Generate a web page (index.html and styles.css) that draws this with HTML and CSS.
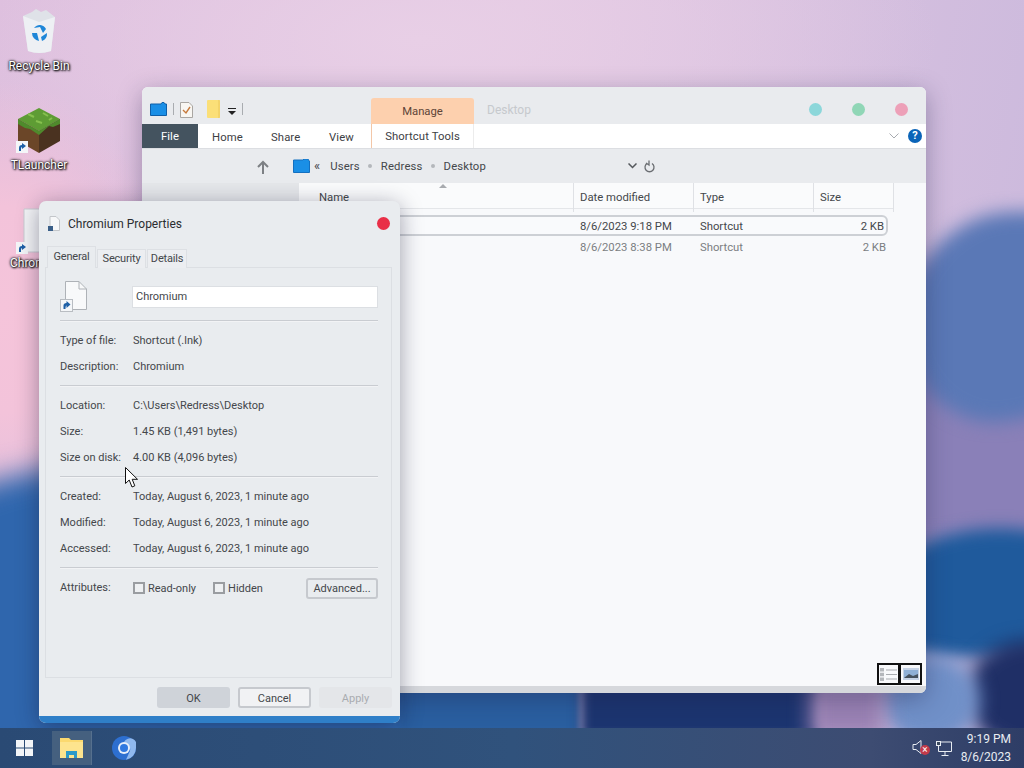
FILE: index.html
```html
<!DOCTYPE html>
<html lang="en">
<head>
    <meta charset="UTF-8">
    <title>Chromium Properties</title>
    <link rel="stylesheet" href="styles.css">
</head>
<body>
    <div class="desktop">
        <div class="blob blob-purple"></div>
        <div class="blob blob-right"></div>
        <div class="blob blob-left"></div>
        <div class="blob blob-deep"></div>
        <div class="blob blob-navy"></div>
        <div class="blob blob-pale"></div>
        <div class="blob blob-mid"></div>
        <div class="blob blob-dark"></div>
        <div class="blob blob-pink"></div>

        <!-- desktop icons -->
        <div class="desk-icon icon-bin">
            <svg width="40" height="46" viewBox="0 0 40 46">
                <path d="M4 8 L13 4 L17 1 L22 4 L27 2 L36 9 L32 43 Q20 47 9 43 Z" fill="#dfe2e8"/>
                <path d="M4 8 L20 14 L36 9 L32 43 Q20 47 9 43 Z" fill="#eef0f4"/>
                <path d="M15 20 A7 7 0 0 1 27 21 L24 25 L21 19 Z M13 25 L18 25 L20 33 A8 8 0 0 1 13 25 Z M28 25 A8 8 0 0 1 23 33 L22 29 Z" fill="#1f86d8"/>
            </svg>
            <span>Recycle Bin</span>
        </div>
        <div class="desk-icon icon-tl">
            <svg width="46" height="46" viewBox="0 0 46 46">
                <path d="M23 1 L44 12 L23 24 L2 12 Z" fill="#5e9c34"/>
                <path d="M2 12 L23 24 L23 46 L2 34 Z" fill="#6b4628"/>
                <path d="M44 12 L23 24 L23 46 L44 34 Z" fill="#4a3220"/>
                <path d="M2 12 L23 24 L44 12 L44 17 L37 20 L33 19 L23 28 L14 22 L9 21 L2 17 Z" fill="#4f8a2c"/>
                <path d="M12 7 L18 10 M27 6 L32 9 M20 14 L26 16 M33 13 L36 11" stroke="#86c04e" stroke-width="2"/>
            </svg>
            <svg class="arrow" width="12" height="12" viewBox="0 0 12 12">
                <rect width="12" height="12" fill="#f4f6f8"/>
                <path d="M3 10 V7 Q3 4 6 4 V2 L10 5 L6 8 V6 Q5 6 5 8 V10 Z" fill="#1d5fa6"/>
            </svg>
            <span>TLauncher</span>
        </div>
        <div class="desk-icon icon-chrome">
            <svg width="40" height="46" viewBox="0 0 40 46">
                <path d="M4 1 H28 L36 9 V44 H4 Z" fill="#f3f4f6" stroke="#c9ccd2"/>
            </svg>
            <svg class="arrow" width="12" height="12" viewBox="0 0 12 12">
                <rect width="12" height="12" fill="#f4f6f8"/>
                <path d="M3 10 V7 Q3 4 6 4 V2 L10 5 L6 8 V6 Q5 6 5 8 V10 Z" fill="#1d5fa6"/>
            </svg>
            <span>Chromium</span>
        </div>

        <!-- explorer window -->
        <div class="explorer">
            <div class="ex-title">
                <div class="qat">
                    <svg class="qat-folder" width="17" height="14" viewBox="0 0 17 14">
                        <path d="M.5 2 H11 L12 .5 H14 L15 2 H16.500 V13.500 H.5 Z" fill="#1a8fe6" stroke="#0f5fa8"/>
                    </svg>
                    <span class="qat-sep"></span>
                    <svg width="13" height="16" viewBox="0 0 13 16">
                        <path d="M.5.5 H9 L12.500 4 V15.500 H.5 Z" fill="#f8f6f2" stroke="#a9a6a2"/>
                        <path d="M3 8 L6 11 L10 5" fill="none" stroke="#c77a3c" stroke-width="1.400"/>
                    </svg>
                    <svg class="qat-note" width="13" height="18" viewBox="0 0 13 18">
                        <rect width="13" height="18" rx="1" fill="#fbdf78"/>
                        <path d="M12 0 V18" stroke="#ecc85c"/>
                    </svg>
                    <svg class="qat-drop" width="8" height="7" viewBox="0 0 8 7">
                        <path d="M0 0 H8 V1 H0 Z M0 3 H8 L4 7 Z" fill="#222"/>
                    </svg>
                    <span class="qat-sep"></span>
                </div>
                <div class="manage">Manage</div>
                <div class="ex-caption">Desktop</div>
                <div class="dots">
                    <span class="dot dot-min"></span>
                    <span class="dot dot-max"></span>
                    <span class="dot dot-close"></span>
                </div>
            </div>
            <div class="ribbon">
                <div class="rb-file">File</div>
                <div class="rb-tab rb-home">Home</div>
                <div class="rb-tab rb-share">Share</div>
                <div class="rb-tab rb-view">View</div>
                <div class="rb-tools">Shortcut Tools</div>
                <svg class="rb-chev" width="10" height="6" viewBox="0 0 10 6">
                    <path d="M.5.5 L5 5 L9.500.5" fill="none" stroke="#a8abb0"/>
                </svg>
                <div class="rb-help">?</div>
            </div>
            <div class="addr">
                <svg class="addr-up" width="12" height="14" viewBox="0 0 12 14">
                    <path d="M6 14 V2 M1 7 L6 2 L11 7" fill="none" stroke="#7d8084" stroke-width="2"/>
                </svg>
                <svg width="17" height="14" viewBox="0 0 17 14">
                    <path d="M.5 1 H10 L11 0 H15 L16 2 H16.500 V13.500 H.5 Z" fill="#1a8fe6" stroke="#1470c0"/>
                </svg>
                <span class="addr-more">«</span>
                <span>Users</span><span class="crumb-dot"></span>
                <span>Redress</span><span class="crumb-dot"></span>
                <span>Desktop</span>
                <svg class="addr-chev" width="9" height="6" viewBox="0 0 9 6">
                    <path d="M.5.5 L4.500 4.500 L8.500.5" fill="none" stroke="#55585c" stroke-width="1.500"/>
                </svg>
                <svg class="addr-ref" width="11" height="13" viewBox="0 0 11 13">
                    <path d="M3 3.500 A4.500 4.500 0 1 0 8 3.500 M5 .5 V5 L2 3" fill="none" stroke="#6b6e72" stroke-width="1.300"/>
                </svg>
            </div>
            <div class="ex-body">
                <div class="nav-pane"></div>
                <div class="list">
                    <div class="list-head">
                        <div class="col col-name">Name<i class="caret"></i></div>
                        <div class="col">Date modified</div>
                        <div class="col">Type</div>
                        <div class="col">Size</div>
                    </div>
                    <div class="file selected">
                        <div></div>
                        <div class="cell">8/6/2023 9:18 PM</div>
                        <div class="cell">Shortcut</div>
                        <div class="cell right">2 KB</div>
                    </div>
                    <div class="file dim">
                        <div></div>
                        <div class="cell">8/6/2023 8:38 PM</div>
                        <div class="cell">Shortcut</div>
                        <div class="cell right">2 KB</div>
                    </div>
                    <div class="view-btns">
                        <div class="view-btn">
                            <svg width="17" height="13" viewBox="0 0 17 13">
                                <path d="M0 0 H4 V3.500 H0 Z M0 4.700 H4 V8.200 H0 Z M0 9.400 H4 V13 H0 Z" fill="#b4b7bb"/>
                                <path d="M6 2 H17 M6 6.500 H17 M6 11 H17" stroke="#a9acb0"/>
                            </svg>
                        </div>
                        <div class="view-btn">
                            <svg width="16" height="12" viewBox="0 0 16 12">
                                <rect width="16" height="12" fill="#c6d3e6"/>
                                <rect x="1" y="2" width="14" height="8" fill="#8fb0d6"/>
                                <path d="M1 10 L6 6 L10 8 L15 6 V10 Z" fill="#46525e"/>
                            </svg>
                        </div>
                    </div>
                </div>
            </div>
            <div class="ex-foot"></div>
        </div>

        <!-- properties dialog -->
        <div class="dialog">
            <div class="dlg-title">
                <svg width="12" height="15" viewBox="0 0 12 15">
                    <path d="M2 .5 H8 L11.500 4 V14.500 H2 Z" fill="#f7f8f9" stroke="#c3c6ca"/>
                    <rect y="10" width="5" height="5" fill="#3a5f88"/>
                </svg>
                <span class="dlg-name">Chromium Properties</span>
                <span class="dlg-close"></span>
            </div>
            <div class="tabs">
                <div class="tab tab-general active">General</div>
                <div class="tab tab-security">Security</div>
                <div class="tab tab-details">Details</div>
            </div>
            <div class="panel">
                <div class="head-row">
                    <div class="file-icon">
                        <svg width="27" height="31" viewBox="0 0 27 31">
                            <path d="M5.500.5 H19 L26.500 8 V28.500 H5.500 Z" fill="#f8f9fa" stroke="#aeb2b7"/>
                            <path d="M19 .5 V8 H26.500" fill="none" stroke="#aeb2b7"/>
                            <rect x=".5" y="18.500" width="12" height="12" fill="#f4f6f8" stroke="#b9bdc2"/>
                            <path d="M3.500 28 V24.500 Q3.500 22 6.500 22 V20 L10.500 23.500 L6.500 27 V24.500 Q5.500 24.500 5.500 28 Z" fill="#1d5fa6"/>
                        </svg>
                    </div>
                    <div class="name-box">Chromium</div>
                </div>
                <hr class="sep">
                <div class="prop-row"><span class="prop-label">Type of file:</span><span>Shortcut (.lnk)</span></div>
                <div class="prop-row"><span class="prop-label">Description:</span><span>Chromium</span></div>
                <hr class="sep">
                <div class="prop-row"><span class="prop-label">Location:</span><span>C:\Users\Redress\Desktop</span></div>
                <div class="prop-row"><span class="prop-label">Size:</span><span>1.45 KB (1,491 bytes)</span></div>
                <div class="prop-row"><span class="prop-label">Size on disk:</span><span>4.00 KB (4,096 bytes)</span></div>
                <hr class="sep">
                <div class="prop-row"><span class="prop-label">Created:</span><span>Today, August 6, 2023, 1 minute ago</span></div>
                <div class="prop-row"><span class="prop-label">Modified:</span><span>Today, August 6, 2023, 1 minute ago</span></div>
                <div class="prop-row"><span class="prop-label">Accessed:</span><span>Today, August 6, 2023, 1 minute ago</span></div>
                <hr class="sep">
                <div class="attr-row">
                    <span class="prop-label attr-label">Attributes:</span>
                    <span class="check"><i></i>Read-only</span>
                    <span class="check"><i></i>Hidden</span>
                    <span class="btn-adv">Advanced...</span>
                </div>
            </div>
            <div class="dlg-btns">
                <div class="btn btn-ok">OK</div>
                <div class="btn btn-cancel">Cancel</div>
                <div class="btn btn-apply">Apply</div>
            </div>
            <div class="dlg-bar"></div>
        </div>

        <!-- mouse cursor -->
        <svg class="cursor" width="14" height="21" viewBox="0 0 14 21">
            <path d="M.5.5 V16.500 L4.200 13 L7 20 L9.800 18.800 L7.200 12.300 H12.500 Z" fill="#fff" stroke="#111"/>
        </svg>

        <!-- taskbar -->
        <div class="taskbar">
            <svg class="start" width="17" height="16" viewBox="0 0 17 16">
                <path d="M0 0 H8 V7.500 H0 Z M9 0 H17 V7.500 H9 Z M0 8.500 H8 V16 H0 Z M9 8.500 H17 V16 H9 Z" fill="#f2f5f8"/>
            </svg>
            <div class="task task-active">
                <svg width="23" height="20" viewBox="0 0 23 20">
                    <path d="M0 0 H9 L11 2 H23 V18 H0 Z" fill="#fbd96f"/>
                    <path d="M0 4 H23 V20 H0 Z" fill="#fde48e"/>
                    <path d="M6 13 H17 V20 H14 V17 H9 V20 H6 Z" fill="#2c9ac9"/>
                </svg>
            </div>
            <div class="task">
                <svg width="24" height="24" viewBox="0 0 24 24">
                    <circle cx="12" cy="12" r="12" fill="#2d6fd0"/>
                    <path d="M12 6 A6 6 0 0 1 24 12 A12 12 0 0 1 14 23.800 L17 17 A6 6 0 0 0 18 12 Z" fill="#8fb8ee"/>
                    <circle cx="12" cy="12" r="6" fill="#e6eefa"/>
                    <circle cx="12" cy="12" r="4" fill="#2f78e0"/>
                </svg>
            </div>
            <div class="tray">
                <div class="tray-sound">
                    <svg width="14" height="14" viewBox="0 0 14 14">
                        <path d="M1 4.500 H4 L9 .5 V13.500 L4 9.500 H1 Z" fill="none" stroke="#e8ecf2"/>
                    </svg>
                    <span class="mute">×</span>
                </div>
                <svg width="16" height="15" viewBox="0 0 16 15">
                    <path d="M4 1 H15.500 V10.500 H2.500 V5 M9 10.500 V14 M5.500 14.500 H12.500" fill="none" stroke="#e8ecf2"/>
                    <rect x=".5" y=".5" width="4" height="4" fill="#3a4a60" stroke="#e8ecf2"/>
                </svg>
                <div class="clock">
                    <div>9:19 PM</div>
                    <div>8/6/2023</div>
                </div>
            </div>
        </div>
    </div>
</body>
</html>
```

FILE: styles.css
```css
* {
    box-sizing: border-box;
}
html, body {
    margin: 0;
    height: 100%;
    overflow: hidden;
}
body {
    font-family: "Roboto", "Liberation Sans", sans-serif;
    font-size: 11.3px;
    color: #44474b;
}
.desktop {
    position: relative;
    width: 1024px;
    height: 768px;
    overflow: hidden;
    background:
        radial-gradient(ellipse 170px 230px at 0 310px, #f5c4da 0%, #f3c3da 45%, rgba(243, 195, 218, 0) 100%),
        radial-gradient(ellipse 520px 200px at 420px 40px, #e8cfe6 0%, rgba(232, 207, 230, 0) 100%),
        linear-gradient(100deg, #dcbddd 0%, #e2c7e2 45%, #c9b8dc 100%);
}
.blob {
    position: absolute;
}
.blob-purple {
    left: 860px;
    top: 270px;
    width: 260px;
    height: 280px;
    background: #8a80b8;
    filter: blur(14px);
}
.blob-right {
    left: 910px;
    top: 212px;
    width: 210px;
    height: 210px;
    border-radius: 50% 30% 60% 40%;
    background: #5a78b6;
    filter: blur(9px);
}
.blob-left {
    left: -120px;
    top: 465px;
    width: 560px;
    height: 320px;
    border-radius: 40% 40% 0 0;
    background: #2f66ad;
    filter: blur(14px);
}
.blob-deep {
    left: 880px;
    top: 528px;
    width: 240px;
    height: 130px;
    border-radius: 50% 50% 30% 30%;
    background: #1f5a9c;
    filter: blur(8px);
}
.blob-navy {
    left: 965px;
    top: 640px;
    width: 130px;
    height: 110px;
    border-radius: 50%;
    background: #1f2f66;
    filter: blur(9px);
}
.blob-pale {
    left: 880px;
    top: 655px;
    width: 100px;
    height: 90px;
    border-radius: 50%;
    background: #7090c8;
    filter: blur(9px);
}
.blob-mid {
    left: 400px;
    top: 680px;
    width: 180px;
    height: 60px;
    background: #2a5fa0;
    filter: blur(3px);
}
.blob-dark {
    left: 580px;
    top: 680px;
    width: 240px;
    height: 60px;
    background: #1c3570;
    filter: blur(6px);
}
.blob-pink {
    left: 810px;
    top: 680px;
    width: 75px;
    height: 60px;
    background: #9a82b4;
    filter: blur(10px);
}

/* desktop icons */
.desk-icon {
    position: absolute;
    width: 76px;
    display: flex;
    flex-direction: column;
    align-items: center;
    color: #fff;
    font-size: 12px;
    text-shadow: 0 0 2px #000, 1px 1px 2px #000, 0 0 3px #222;
}
.desk-icon span {
    margin-top: 5px;
}
.desk-icon .arrow {
    position: absolute;
    left: 15px;
    top: 34px;
}
.icon-bin {
    left: 1px;
    top: 8px;
}
.icon-tl {
    left: 1px;
    top: 107px;
}
/* only the part left of the dialog is on show */
.icon-chrome {
    left: 0;
    top: 208px;
    width: 39px;
    height: 66px;
    overflow: hidden;
    align-items: flex-start;
}
.icon-chrome svg:first-child {
    margin-left: 20px;
    flex: none;
}
.icon-chrome .arrow {
    left: 16px;
}
.icon-chrome span {
    margin: 2px 0 0 10px;
    white-space: nowrap;
}

/* explorer window */
.explorer {
    position: absolute;
    left: 142px;
    top: 87px;
    width: 784px;
    height: 606px;
    display: flex;
    flex-direction: column;
    border-radius: 6px;
    overflow: hidden;
    background: #f8f9fb;
    box-shadow: 0 6px 24px rgba(30, 30, 70, 0.35);
}
.ex-title {
    height: 37px;
    flex: none;
    display: flex;
    background: #e9ebee;
}
.qat {
    width: 229px;
    height: 37px;
    padding: 15px 0 0 8px;
    display: flex;
    align-items: flex-start;
    gap: 6px;
}
.qat-sep {
    width: 1px;
    height: 12px;
    background: #a9acb0;
    margin-top: 1px;
}
.qat-note {
    margin: -2px 0 0 8px;
}
.qat-drop {
    margin: 6px 0 0 2px;
}
.manage {
    width: 103px;
    height: 26px;
    margin-top: 11px;
    background: #fdd0ae;
    border-radius: 3px 3px 0 0;
    text-align: center;
    line-height: 28px;
    color: #5e4438;
}
.ex-caption {
    margin-left: 13px;
    line-height: 46px;
    color: #c6c9cd;
    font-size: 12px;
}
.dots {
    margin-left: auto;
    display: flex;
    gap: 30px;
    padding: 16px 18px 0 0;
}
.dot {
    width: 13px;
    height: 13px;
    border-radius: 50%;
}
.dot-min {
    background: #8cd7da;
}
.dot-max {
    background: #90d6b6;
}
.dot-close {
    background: #eda0b8;
}
.ribbon {
    position: relative;
    height: 24px;
    flex: none;
    display: flex;
    align-items: center;
    background: #fff;
    letter-spacing: 0.1px;
    box-shadow: 0 1px 0 #dcdee2;
}
.rb-file {
    width: 56px;
    height: 24px;
    line-height: 26px;
    text-align: center;
    background: #44535f;
    color: #fff;
}
.rb-tab {
    padding-top: 2px;
    color: #3d4044;
}
.rb-home {
    width: 59px;
    margin-left: 14px;
}
.rb-share {
    width: 58px;
}
.rb-view {
    width: 42px;
}
.rb-tools {
    width: 103px;
    height: 24px;
    line-height: 26px;
    text-align: center;
    border-left: 1px solid #f3c7a8;
    border-right: 1px solid #ececec;
    color: #3d4044;
}
.rb-chev {
    margin-left: auto;
}
.rb-help {
    width: 14px;
    height: 14px;
    margin: 0 4px 0 9px;
    border-radius: 50%;
    background: #0a64b8;
    color: #fff;
    font-size: 11px;
    font-weight: bold;
    line-height: 14px;
    text-align: center;
    letter-spacing: 0;
}
.addr {
    height: 35px;
    flex: none;
    display: flex;
    align-items: center;
    padding-top: 1px;
    background: #e9ebee;
    letter-spacing: 0.15px;
    color: #44474b;
}
.addr-up {
    margin: 1px 24px 0 115px;
}
.addr-more {
    margin: -2px 10px 0 4px;
    font-size: 13px;
}
.crumb-dot {
    width: 4px;
    height: 4px;
    margin: 0 8.5px;
    border-radius: 50%;
    background: #b4b7bb;
}
.addr-chev {
    margin-left: 142px;
}
.addr-ref {
    margin-left: 7px;
}
.ex-body {
    flex: 1;
    display: flex;
    min-height: 0;
}
.nav-pane {
    width: 157px;
    background: #e5e7ea;
}
.list {
    position: relative;
    flex: 1;
    background: #f8f9fb;
}
.list-head,
.file {
    display: grid;
}
.list-head {
    grid-template-columns: 275px 120px 120px 80px;
    width: 595px;
    height: 26px;
    line-height: 29px;
    border-bottom: 1px solid #e4e6e9;
    background: #fafbfc;
}
.col {
    position: relative;
    padding-left: 6px;
    border-right: 1px solid #dfe1e5;
}
.col-name {
    padding-left: 20px;
}
.caret {
    position: absolute;
    left: 140px;
    top: 1px;
    border: 4px solid transparent;
    border-top: 0;
    border-bottom: 4px solid #a8abaf;
}
.file {
    grid-template-columns: 275px 120px 120px 74px;
    width: 589px;
    height: 21px;
}
.selected {
    grid-template-columns: 273px 120px 120px 72px;
    margin-top: 6px;
    line-height: 19px;
    border: 2px solid #cdd0d5;
    border-radius: 6px;
    background: #f9fafc;
}
.dim {
    color: #7b7e82;
    line-height: 23px;
}
.cell {
    padding-left: 6px;
}
.right {
    padding-right: 2px;
    text-align: right;
}
.view-btns {
    position: absolute;
    right: 4px;
    bottom: 1px;
    display: flex;
}
.view-btn {
    width: 23px;
    height: 22px;
    display: flex;
    align-items: center;
    justify-content: center;
    border: 2px solid #111;
    background: #f8f9fb;
}
.view-btn + .view-btn {
    margin-left: -1px;
}
.ex-foot {
    height: 7px;
    flex: none;
    background: #d6d8dc;
}

/* properties dialog */
.dialog {
    position: absolute;
    left: 39px;
    top: 201px;
    width: 361px;
    height: 522px;
    display: flex;
    flex-direction: column;
    border-radius: 7px;
    overflow: hidden;
    background: #e9ecef;
    font-size: 11px;
    box-shadow: 0 4px 22px rgba(20, 20, 50, 0.4);
}
.dlg-title {
    height: 45px;
    flex: none;
    display: flex;
    align-items: center;
    padding: 0 10px 0 9px;
}
.dlg-name {
    margin-left: 8px;
    font-size: 12px;
    color: #2b2d30;
}
.dlg-close {
    width: 13px;
    height: 13px;
    margin-left: auto;
    border-radius: 50%;
    background: #e92f47;
}
.tabs {
    position: relative;
    z-index: 1;
    height: 22px;
    flex: none;
    display: flex;
    align-items: flex-end;
    gap: 1px;
    margin: 0 0 -1px 8px;
}
.tab {
    height: 19px;
    line-height: 18px;
    text-align: center;
    letter-spacing: -0.2px;
    background: #eceef1;
    border: 1px solid #dde0e4;
    border-bottom: 0;
}
.tab-general {
    width: 49px;
}
.tab-security {
    width: 49px;
}
.tab-details {
    width: 40px;
}
.tab.active {
    height: 22px;
    background: #e9ecef;
    line-height: 19px;
}
.panel {
    height: 411px;
    flex: none;
    margin: 0 8px 0 6px;
    padding: 18px 13px 0 14px;
    border: 1px solid #dcdfe3;
    background: #e9ecef;
}
.head-row {
    height: 28px;
    display: flex;
    align-items: flex-start;
}
.file-icon {
    width: 73px;
    margin-top: -5px;
}
.name-box {
    width: 246px;
    height: 22px;
    flex: none;
    padding-left: 3px;
    line-height: 20px;
    background: #fff;
    border: 1px solid #dcdfe3;
}
.sep {
    height: 2px;
    margin: 6px 0 5px;
    border: 0;
    border-top: 1px solid #c9ccd1;
    background: #f2f3f5;
}
.prop-row {
    display: flex;
    height: 26px;
    line-height: 28px;
}
.prop-label {
    width: 73px;
    flex: none;
}
.attr-row {
    display: flex;
    align-items: center;
    height: 26px;
    margin-top: 6px;
}
.attr-label {
    margin-top: -2px;
}
.check {
    display: flex;
    align-items: center;
    margin-right: 17px;
}
.check i {
    width: 12px;
    height: 12px;
    margin-right: 3px;
    border: 2px solid #9a9da1;
    background: #eef0f2;
}
.btn-adv {
    width: 72px;
    height: 21px;
    margin-left: auto;
    line-height: 17px;
    text-align: center;
    border: 2px solid #c6c9ce;
    border-radius: 3px;
}
.dlg-btns {
    flex: 1;
    display: flex;
    justify-content: flex-end;
    gap: 8px;
    padding: 9px 8px 0 0;
}
.btn {
    width: 73px;
    height: 21px;
    line-height: 23px;
    text-align: center;
    border-radius: 3px;
}
.btn-ok {
    background: #cfd3d9;
}
.btn-cancel {
    border: 2px solid #c6c9ce;
    background: #f1f2f4;
    line-height: 19px;
}
.btn-apply {
    background: #e4e6e9;
    color: #a9acb0;
}
.dlg-bar {
    height: 7px;
    flex: none;
    background: #2f7fc8;
}
.cursor {
    position: absolute;
    left: 125px;
    top: 467px;
}

/* taskbar */
.taskbar {
    position: absolute;
    left: 0;
    top: 728px;
    width: 1024px;
    height: 40px;
    display: flex;
    align-items: center;
    font-size: 12px;
    background: linear-gradient(90deg, #2a4a74 0%, #30527c 50%, #3d4c72 85%, #2e3d66 100%);
    color: #e8ecf2;
}
.start {
    margin: 0 19px 0 16px;
}
.task {
    width: 40px;
    height: 34px;
    display: flex;
    align-items: center;
    justify-content: center;
    margin-right: 12px;
}
.task-active {
    background: #45607f;
    border-right: 1px solid #56708e;
}
.tray {
    margin-left: auto;
    display: flex;
    align-items: center;
}
.tray-sound {
    position: relative;
    width: 24px;
}
.mute {
    position: absolute;
    left: 8px;
    top: 5px;
    width: 10px;
    height: 10px;
    border-radius: 50%;
    background: #c23a4a;
    color: #fff;
    font-size: 10px;
    line-height: 10px;
    text-align: center;
}
.clock {
    width: 72px;
    padding-right: 13px;
    text-align: right;
    line-height: 18px;
}
```
